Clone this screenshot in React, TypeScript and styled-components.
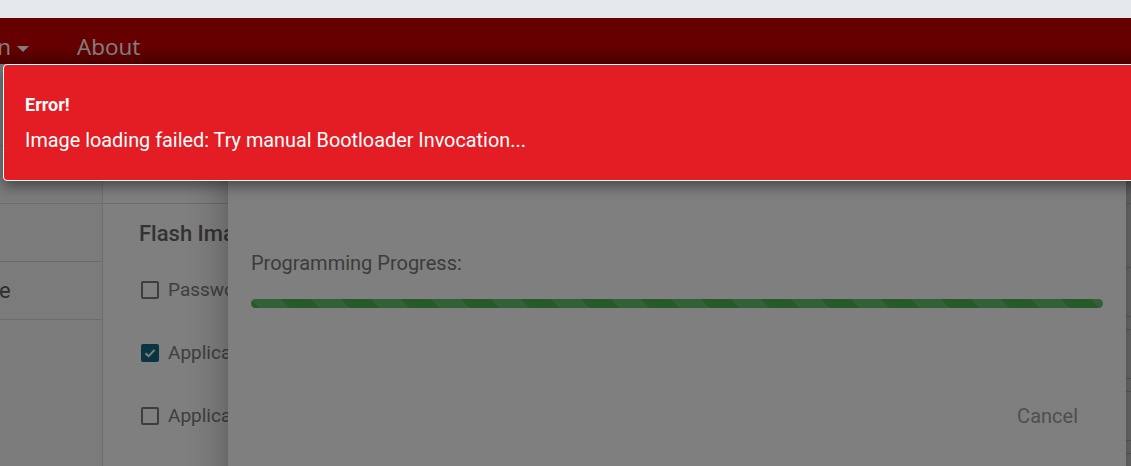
import React from 'react';
import styled, { createGlobalStyle } from 'styled-components';

// the page is scrolled sideways, so its left part is out of view
const SCROLL_X = 140;

const GlobalStyle = createGlobalStyle`
  html, body {
    margin: 0;
    padding: 0;
    height: 100%;
    overflow: hidden;
  }
  body {
    font-family: Roboto, "Liberation Sans", Arial, sans-serif;
    background: #e5e9ec;
  }
  #root {
    height: 100%;
  }
`;

const Screen = styled.div`
  display: flex;
  flex-direction: column;
  height: 100vh;
`;

const TopStrip = styled.div`
  height: 18px;
  flex-shrink: 0;
  background: #e5e9ec;
`;

const AppFrame = styled.div`
  position: relative;
  flex: 1;
  overflow: hidden;
  background: #fff;
`;

const Page = styled.div`
  display: flex;
  flex-direction: column;
  height: 100%;
  width: 1400px;
  margin-left: -${SCROLL_X}px;
`;

const Header = styled.header`
  height: 46px;
  flex-shrink: 0;
  box-sizing: border-box;
  display: flex;
  align-items: flex-start;
  padding: 14px 0 0 61px;
  background: linear-gradient(to bottom, #cc0000 0%, #cc0000 62%, #9a0000 100%);
`;

const NavItem = styled.div`
  display: flex;
  align-items: center;
  gap: 6px;
  padding: 0 24px;
  font-family: "Open Sans", "Liberation Sans", sans-serif;
  font-size: 22.5px;
  line-height: 30px;
  color: #fff;
`;

const Caret = styled.span`
  width: 0;
  height: 0;
  margin-top: 4px;
  border-left: 6px solid transparent;
  border-right: 6px solid transparent;
  border-top: 6px solid currentColor;
`;

const Body = styled.div`
  flex: 1;
  display: flex;
`;

const Sidebar = styled.nav`
  width: 243px;
  flex-shrink: 0;
  box-sizing: border-box;
  padding-top: 24px;
  background: #f6f6f6;
  border-right: 1px solid #dcdcdc;
`;

const SideItem = styled.div`
  height: 58px;
  box-sizing: border-box;
  display: flex;
  align-items: center;
  padding-left: 27px;
  border-bottom: 1px solid #d8d8d8;
  font-size: 22px;
  color: #5c5c5c;
`;

const Main = styled.main`
  width: 1023px;
  flex-shrink: 0;
  display: flex;
  flex-direction: column;
  background: #fff;
`;

const PanelHead = styled.div<{ $line: string }>`
  height: 140px;
  flex-shrink: 0;
  box-sizing: border-box;
  border-bottom: 1px solid ${(p) => p.$line};
`;

const MainContent = styled.section`
  padding: 13px 36px;
`;

const SectionTitle = styled.h2`
  margin: 0;
  font-size: 22px;
  line-height: 33px;
  font-weight: 500;
  color: #666;
  white-space: nowrap;
`;

const CheckList = styled.div`
  margin-top: 8px;
  display: flex;
  flex-direction: column;
`;

const CheckRow = styled.label`
  height: 63px;
  display: flex;
  align-items: center;
  gap: 9px;
  padding-left: 2px;
  font-size: 19px;
  color: #7e7e7e;
  white-space: nowrap;
`;

const Box = styled.span<{ $checked?: boolean }>`
  width: 18px;
  height: 18px;
  box-sizing: border-box;
  flex-shrink: 0;
  display: flex;
  align-items: center;
  justify-content: center;
  border-radius: 2px;
  border: 2px solid ${(p) => (p.$checked ? '#166882' : '#7a7a7a')};
  background: ${(p) => (p.$checked ? '#166882' : 'transparent')};
`;

const RightPanel = styled.aside`
  flex: 1;
  display: flex;
  flex-direction: column;
  background: #dadada;
`;

const RightList = styled.div`
  display: flex;
  flex-direction: column;
  gap: 12px;
  padding-top: 63px;
`;

const RightCard = styled.div`
  height: 48px;
  border-top: 1px solid #bababa;
  border-bottom: 1px solid #bababa;
`;

const Dialog = styled.div`
  position: absolute;
  left: 228px;
  top: 108px;
  width: 898px;
  height: 460px;
  box-sizing: border-box;
  padding: 0 23px;
  display: flex;
  flex-direction: column;
  background: #fff;
  border-radius: 4px;
  box-shadow: 0 11px 15px -7px rgba(0, 0, 0, 0.2), 0 24px 38px 3px rgba(0, 0, 0, 0.14),
    0 9px 46px 8px rgba(0, 0, 0, 0.12);
`;

const DialogTitle = styled.h2`
  margin: 0;
  padding: 24px 0 20px;
  font-size: 22px;
  line-height: 32px;
  font-weight: 500;
  color: #444;
`;

const DialogBody = styled.div`
  padding-top: 46px;
`;

const ProgressLabel = styled.div`
  font-size: 20px;
  line-height: 30px;
  color: #787878;
`;

const ProgressTrack = styled.div`
  margin-top: 21px;
  height: 9px;
  border-radius: 5px;
  background-color: #4cb552;
  background-image: linear-gradient(
    45deg,
    rgba(255, 255, 255, 0.15) 25%,
    transparent 25%,
    transparent 50%,
    rgba(255, 255, 255, 0.15) 50%,
    rgba(255, 255, 255, 0.15) 75%,
    transparent 75%,
    transparent
  );
  background-size: 60px 60px;
`;

const DialogActions = styled.div`
  margin-top: 86px;
  display: flex;
  justify-content: flex-end;
`;

const TextButton = styled.button`
  height: 44px;
  padding: 0 25px;
  border: none;
  background: transparent;
  font-family: inherit;
  font-size: 20px;
  color: #9e9e9e;
  cursor: pointer;
`;

const Scrim = styled.div`
  position: absolute;
  inset: 0;
  background: rgba(0, 0, 0, 0.5);
`;

const Toast = styled.div`
  position: absolute;
  top: 46px;
  left: 3px;
  right: -12px;
  padding: 26px 21px 26px;
  background: #e41c24;
  border: 1px solid #fff;
  border-radius: 4px;
  color: #fff;
  box-shadow: 0 5px 14px rgba(0, 0, 0, 0.45);
`;

const ToastTitle = styled.div`
  font-size: 18px;
  line-height: 27px;
  font-weight: 700;
`;

const ToastText = styled.div`
  margin-top: 9px;
  font-size: 19.85px;
  line-height: 27px;
`;

const CheckMark = () => (
  <svg width="14" height="14" viewBox="0 0 14 14">
    <path d="M2.5 7.2 L5.6 10.2 L11.6 3.9" fill="none" stroke="#fff" strokeWidth="2" />
  </svg>
);

const sideItems = ['Connect', 'Settings', 'Log', 'Flash Device'];

const images = [
  { label: 'Password Image', checked: false },
  { label: 'Application Image', checked: true },
  { label: 'Application Data', checked: false },
];

export default function App() {
  return (
    <Screen>
      <GlobalStyle />
      <TopStrip />
      <AppFrame>
        <Page>
          <Header>
            <NavItem>
              Action
              <Caret />
            </NavItem>
            <NavItem>About</NavItem>
          </Header>
          <Body>
            <Sidebar>
              {sideItems.map((item) => (
                <SideItem key={item}>{item}</SideItem>
              ))}
            </Sidebar>
            <Main>
              <PanelHead $line="#d8d8d8" />
              <MainContent>
                <SectionTitle>Flash Images</SectionTitle>
                <CheckList>
                  {images.map((img) => (
                    <CheckRow key={img.label}>
                      <Box $checked={img.checked}>{img.checked && <CheckMark />}</Box>
                      {img.label}
                    </CheckRow>
                  ))}
                </CheckList>
              </MainContent>
            </Main>
            <RightPanel>
              <PanelHead $line="#bababa" />
              <RightList>
                {[0, 1, 2, 3].map((i) => (
                  <RightCard key={i} />
                ))}
              </RightList>
            </RightPanel>
          </Body>
        </Page>

        <Dialog>
          <DialogTitle>Programming Device</DialogTitle>
          <DialogBody>
            <ProgressLabel>Programming Progress:</ProgressLabel>
            <ProgressTrack />
          </DialogBody>
          <DialogActions>
            <TextButton>Cancel</TextButton>
          </DialogActions>
        </Dialog>

        <Scrim />

        <Toast>
          <ToastTitle>Error!</ToastTitle>
          <ToastText>Image loading failed: Try manual Bootloader Invocation...</ToastText>
        </Toast>
      </AppFrame>
    </Screen>
  );
}
